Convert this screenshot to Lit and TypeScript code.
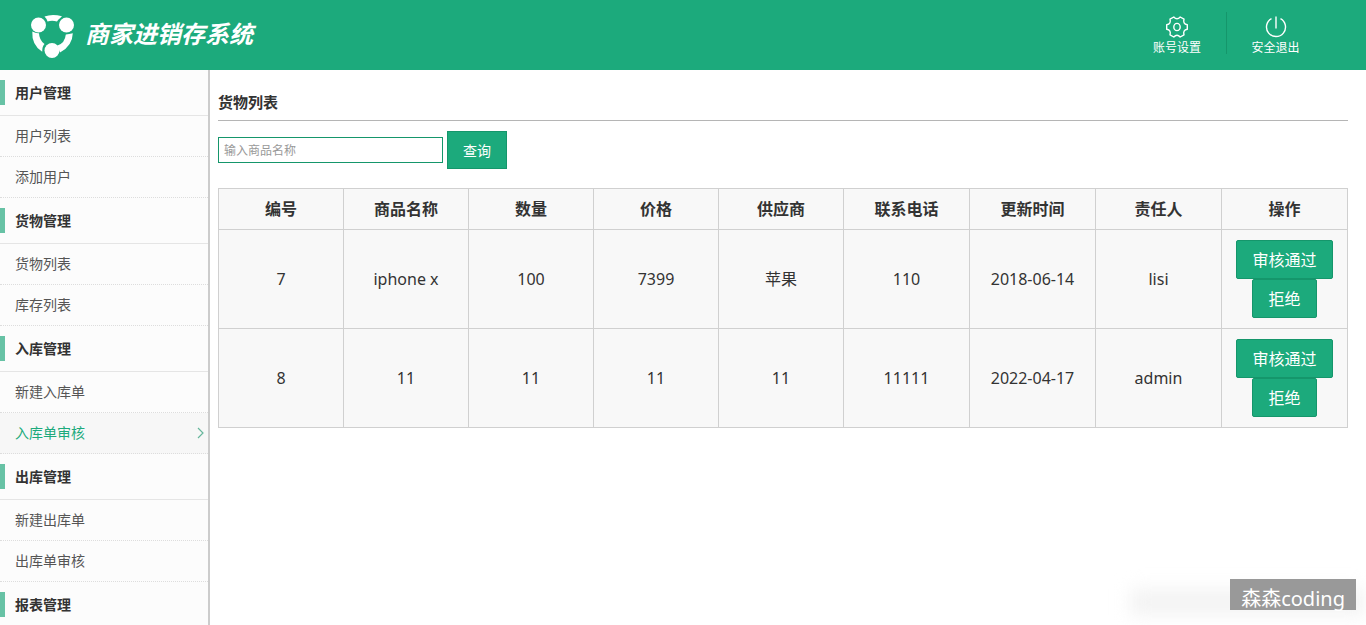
import { LitElement, html, css, svg } from "lit";
import { customElement, property, state } from "lit/decorators.js";
import { classMap } from "lit/directives/class-map.js";

interface MenuGroup {
  title: string;
  items: string[];
}

interface Goods {
  id: string;
  name: string;
  count: string;
  price: string;
  supplier: string;
  phone: string;
  updated: string;
  owner: string;
}

const MENU: MenuGroup[] = [
  { title: "用户管理", items: ["用户列表", "添加用户"] },
  { title: "货物管理", items: ["货物列表", "库存列表"] },
  { title: "入库管理", items: ["新建入库单", "入库单审核"] },
  { title: "出库管理", items: ["新建出库单", "出库单审核"] },
  { title: "报表管理", items: [] },
];

const COLUMNS = ["编号", "商品名称", "数量", "价格", "供应商", "联系电话", "更新时间", "责任人", "操作"];

const ROWS: Goods[] = [
  { id: "7", name: "iphone x", count: "100", price: "7399", supplier: "苹果", phone: "110", updated: "2018-06-14", owner: "lisi" },
  { id: "8", name: "11", count: "11", price: "11", supplier: "11", phone: "11111", updated: "2022-04-17", owner: "admin" },
];

const gear = svg`<path d="M21.3 8.800V13.200Q16.600 14.200 18 18.800L14.200 21Q11 17.500 7.800 21L4 18.800Q5.400 14.200 .7 13.200V8.800Q5.400 7.800 4 3.200L7.800 1Q11 4.500 14.200 1L18 3.200Q16.600 7.800 21.300 8.800Z"/><ellipse cx="11" cy="11" rx="3.2" ry="3.6"/>`;
const power = svg`<path d="M11 0.500v12"/><path d="M6.500 2.700A9.500 9.500 0 1 0 15.500 2.700"/>`;

@customElement("app-header")
export class AppHeader extends LitElement {
  static styles = css`
    :host { display: block; }
    .bar {
      display: flex;
      align-items: center;
      height: 70px;
      padding: 0 42px 0 30px;
      box-sizing: border-box;
      background: #1caa7c;
      color: #fff;
    }
    .brand { display: flex; align-items: center; gap: 10px; flex: 1; margin: 0; }
    .mark { display: block; fill: #fff; }
    .name {
      font: italic 700 24px/32px "Liberation Serif", "Noto Sans CJK SC", sans-serif;
      white-space: nowrap;
    }
    .tools { display: flex; align-items: flex-start; height: 46px; }
    .tool {
      display: flex;
      flex-direction: column;
      align-items: center;
      gap: 2px;
      width: 98px;
      height: 42px;
      padding-top: 4px;
      box-sizing: border-box;
      color: #fff;
      font-size: 12px;
      line-height: 16px;
      text-decoration: none;
      white-space: nowrap;
    }
    .tool + .tool { border-left: 1px solid #15966b; }
    .icon { display: block; flex: none; fill: none; stroke: #fff; stroke-width: 1.4; stroke-linejoin: round; }
  `;

  render() {
    return html`
      <header class="bar">
        <h1 class="brand">
          <svg class="mark" width="45" height="46" viewBox="0 0 45 46" aria-hidden="true">
            <circle cx="8.5" cy="13" r="7.5" />
            <circle cx="36.5" cy="13" r="7.5" />
            <circle cx="22" cy="38.5" r="7.5" />
            <path d="M14.5 4.5Q22 1.500 32 4.200L30 6.300Q28 7.800 27 9.600Q22 8 17.500 9.600Q16.500 6.300 14.500 4.500Z" />
            <path d="M2.3 19.500Q6 21.500 9 21.200Q9.200 28 14.500 32Q12 34.500 12.200 39.800Q1.500 33 2.300 19.500Z" />
            <path d="M35.8 22.500Q39 22 42.800 21.300Q42.500 34 30 40.500L27.500 33.500Q35 31 35.800 22.500Z" />
          </svg>
          <span class="name">商家进销存系统</span>
        </h1>
        <nav class="tools">
          <a class="tool" href="#settings"><svg class="icon" width="22" height="22" viewBox="0 0 22 22" aria-hidden="true">${gear}</svg>账号设置</a>
          <a class="tool" href="#logout"><svg class="icon" width="22" height="22" viewBox="0 0 22 22" aria-hidden="true">${power}</svg>安全退出</a>
        </nav>
      </header>
    `;
  }
}

@customElement("side-menu")
export class SideMenu extends LitElement {
  @property() active = "";

  static styles = css`
    :host { display: block; background: #fcfcfc; border-right: 2px solid #ccc; overflow: hidden; }
    .title {
      display: flex;
      margin: 0;
      padding: 10px 0;
      border-bottom: 1px solid #e5e5e5;
      color: #333;
      font-size: 14px;
      font-weight: 700;
      line-height: 25px;
    }
    .title::before { content: ""; width: 5px; margin-right: 10px; background: #67c2a5; }
    .list { list-style: none; margin: 0; padding: 0; }
    .link {
      display: flex;
      align-items: center;
      justify-content: space-between;
      padding: 0 4px 0 15px;
      border-bottom: 1px dotted #ddd;
      color: #555;
      font-size: 14px;
      line-height: 40px;
      text-decoration: none;
    }
    .current { background: #f7f7f7; color: #1caa7c; }
    .arrow { fill: none; stroke: #67b79c; stroke-width: 1.2; }
  `;

  render() {
    return html`<nav>
      ${MENU.map(
        (group) => html`
          <h2 class="title">${group.title}</h2>
          <ul class="list">
            ${group.items.map((item) => {
              const current = item === this.active;
              return html`<li>
                <a class=${classMap({ link: true, current })} href="#">${item}${current
                  ? html`<svg class="arrow" width="7" height="12" viewBox="0 0 7 12" aria-hidden="true"><path d="M1 1l5 5-5 5" /></svg>`
                  : ""}</a>
              </li>`;
            })}
          </ul>
        `
      )}
    </nav>`;
  }
}

@customElement("goods-page")
export class GoodsPage extends LitElement {
  @state() private keyword = "";

  static styles = css`
    :host { display: block; padding: 15px 18px 0 8px; color: #333; }
    .heading {
      margin: 0 0 10px;
      border-bottom: 1px solid #b5b5b5;
      font-size: 15px;
      font-weight: 700;
      line-height: 35px;
    }
    .search { display: flex; align-items: center; gap: 4px; margin-bottom: 19px; }
    .field {
      box-sizing: border-box;
      width: 225px;
      height: 26px;
      padding: 0 5px;
      border: 1px solid #15966b;
      background: #fff;
      color: #333;
      font: inherit;
      font-size: 12px;
      outline: none;
    }
    .field::placeholder { color: #999; opacity: 1; }
    .button {
      box-sizing: border-box;
      padding: 0 15px;
      border: 1px solid #15966b;
      background: #1caa7c;
      color: #fff;
      font: inherit;
      cursor: pointer;
    }
    .query { height: 38px; font-size: 14px; }
    .action { height: 39px; border-radius: 2px; font-size: 16px; }
    .actions { display: flex; flex-direction: column; align-items: center; }
    .table {
      width: 100%;
      border-collapse: collapse;
      table-layout: fixed;
      background: #f8f8f8;
      font-size: 16px;
      line-height: 20px;
      text-align: center;
    }
    .narrow { width: 125px; }
    .cell { padding: 10px 0; border: 1px solid #d0d0d0; }
    .head { font-weight: 700; }
  `;

  private onInput(e: Event) {
    this.keyword = (e.target as HTMLInputElement).value;
  }

  render() {
    return html`
      <h2 class="heading">货物列表</h2>
      <form class="search" @submit=${(e: Event) => e.preventDefault()}>
        <input class="field" type="text" aria-label="输入商品名称" placeholder="输入商品名称" .value=${this.keyword} @input=${this.onInput} />
        <button class="button query" type="submit">查询</button>
      </form>
      <table class="table">
        <colgroup>
          <col class="narrow" span="5" />
          <col span="4" />
        </colgroup>
        <thead>
          <tr>${COLUMNS.map((c) => html`<th class="cell head" scope="col">${c}</th>`)}</tr>
        </thead>
        <tbody>
          ${ROWS.map(
            (r) => html`<tr>
              ${[r.id, r.name, r.count, r.price, r.supplier, r.phone, r.updated, r.owner].map(
                (v) => html`<td class="cell">${v}</td>`
              )}
              <td class="cell">
                <div class="actions">
                  <button class="button action" type="button">审核通过</button>
                  <button class="button action" type="button">拒绝</button>
                </div>
              </td>
            </tr>`
          )}
        </tbody>
      </table>
    `;
  }
}

@customElement("app-root")
export class AppRoot extends LitElement {
  static styles = css`
    :host {
      display: grid;
      grid-template: auto minmax(0, 1fr) / 210px minmax(0, 1fr);
      position: relative;
      height: 100vh;
      overflow: hidden;
      background: #fff;
      font-family: "Noto Sans", "Noto Sans CJK SC", sans-serif;
    }
    .top { grid-column: 1 / -1; }
    .haze {
      position: absolute;
      right: 0;
      bottom: 10px;
      width: 236px;
      height: 26px;
      background: #f3f3f3;
      filter: blur(9px);
    }
    .stamp {
      position: absolute;
      right: 10px;
      bottom: 15px;
      height: 31px;
      padding: 0 11px;
      background: #999;
      color: #fff;
      font-size: 20px;
      line-height: 40px;
    }
  `;

  render() {
    return html`
      <app-header class="top"></app-header>
      <side-menu active="入库单审核"></side-menu>
      <goods-page></goods-page>
      <div class="haze"></div>
      <div class="stamp">森森coding</div>
    `;
  }
}
